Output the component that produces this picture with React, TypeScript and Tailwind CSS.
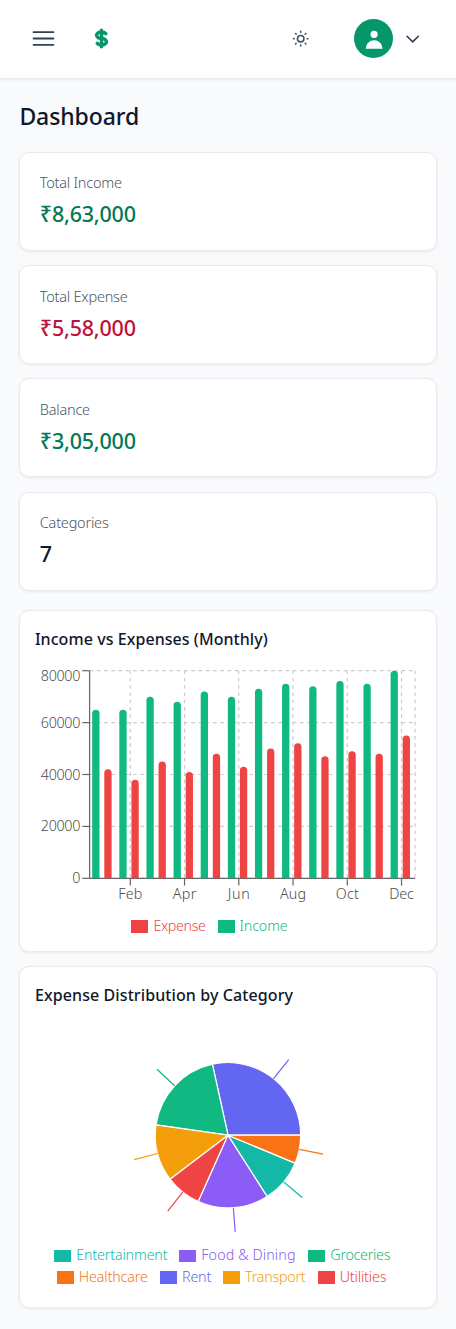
import React from "react";

const INCOME = [65, 65, 70, 68, 72, 70, 73, 75, 74, 76, 75, 80];
const EXPENSE = [42, 38, 45, 41, 48, 43, 50, 52, 47, 49, 48, 55];
const GREEN = "#10b981";
const RED = "#ef4444";

const PLOT = { left: 89.6, right: 415.1, top: 59.7, bottom: 267.3 };
const BAND = (PLOT.right - PLOT.left) / 12;
const X0 = 20;

function Header() {
  return (
    <header className="relative flex h-[77.5px] shrink-0 items-center bg-white pr-[34px] pl-[29px] shadow-[0_1px_3px_rgba(15,23,42,0.12)]">
      <svg className="size-[29px] text-slate-700" viewBox="0 0 24 24" fill="none" stroke="currentColor" strokeWidth="1.5" strokeLinecap="round">
        <path d="M3.75 6.75h16.5M3.75 12h16.5M3.75 17.25h16.5" />
      </svg>
      <svg className="ml-[24.2px] size-[39px] text-[#059669]" viewBox="0 0 24 24" fill="none" stroke="currentColor" strokeWidth="2.2" strokeLinecap="round" strokeLinejoin="round">
        <path d="M12 8c-1.657 0-3 .895-3 2s1.343 2 3 2 3 .895 3 2-1.343 2-3 2m0-8c1.11 0 2.08.402 2.599 1M12 8V7m0 1v8m0 0v1m0-1c-1.11 0-2.08-.402-2.599-1" />
      </svg>
      <svg className="ml-auto size-[19.4px] text-slate-600" viewBox="0 0 24 24" fill="none" stroke="currentColor" strokeWidth="2" strokeLinecap="round" strokeLinejoin="round">
        <path d="M12 3v1m0 16v1m9-9h-1M4 12H3m15.364 6.364l-.707-.707M6.343 6.343l-.707-.707m12.728 0l-.707.707M6.343 17.657l-.707.707M16 12a4 4 0 11-8 0 4 4 0 018 0z" />
      </svg>
      <div className="ml-[43.6px] flex size-[39px] items-center justify-center rounded-full bg-[#059669] text-white">
        <svg className="size-[24.2px]" viewBox="0 0 20 20" fill="currentColor">
          <path d="M10 9a3 3 0 100-6 3 3 0 000 6zm-7 9a7 7 0 1114 0H3z" />
        </svg>
      </div>
      <svg className="ml-[9.2px] size-[19.4px] text-slate-700" viewBox="0 0 24 24" fill="none" stroke="currentColor" strokeWidth="2" strokeLinecap="round" strokeLinejoin="round">
        <path d="M19 9l-7 7-7-7" />
      </svg>
    </header>
  );
}

const CARD = "rounded-[10px] border border-[#e8eaef] bg-white shadow-[0_1px_3px_rgba(15,23,42,0.07)]";

function Stat({ label, value, color }: { label: string; value: string; color: string }) {
  return (
    <div className={`${CARD} h-[98.8px] px-[19.4px] pt-[19.4px]`}>
      <div className="text-[14.5px] leading-[20px] font-light tracking-[-0.22px] text-[#4b5563]">{label}</div>
      <div className={`mt-[5px] text-[21.5px] leading-[34px] font-medium tracking-[-0.2px] ${color}`}>{value}</div>
    </div>
  );
}

function BarChart() {
  const axis = { stroke: "#666", strokeWidth: 1.21 };
  const rows = [0, 20000, 40000, 60000, 80000];
  const h = PLOT.bottom - PLOT.top;
  const cols = ["Feb", "Apr", "Jun", "Aug", "Oct", "Dec"];
  const widths = [24, 23.5, 22, 26, 23, 24.5];
  const bar = (x: number, v: number) => {
    const y = PLOT.bottom - (v / 80) * h;
    return `M${x} ${PLOT.bottom}V${y + 3.65}a3.65 3.65 0 0 1 7.3 0V${PLOT.bottom}z`;
  };
  return (
    <svg className="block h-[245px] w-[400px] font-['Noto_Sans',sans-serif] text-[14.3px] font-light" viewBox={`${X0} 50 400 245`} fill="#4d4d4d">
      <g stroke="#ccc" strokeWidth="1.21" strokeDasharray="3.63 3.63">
        {rows.map((r) => (
          <path key={r} d={`M${PLOT.left} ${PLOT.bottom - (r / 80000) * h}H${PLOT.right}`} />
        ))}
        {cols.map((c, i) => (
          <path key={c} d={`M${PLOT.left + BAND * (1.5 + i * 2)} ${PLOT.top}V${PLOT.bottom}`} />
        ))}
        <path d={`M${PLOT.right} ${PLOT.top}V${PLOT.bottom}`} />
      </g>
      <g {...axis}>
        <path d={`M${PLOT.left} ${PLOT.bottom}H${PLOT.right}M${PLOT.left} ${PLOT.top}V${PLOT.bottom}`} />
        {rows.map((r) => (
          <path key={r} d={`M${PLOT.left - 7.3} ${PLOT.bottom - (r / 80000) * h}h7.3`} />
        ))}
        {cols.map((c, i) => (
          <path key={c} d={`M${PLOT.left + BAND * (1.5 + i * 2)} ${PLOT.bottom}v7.3`} />
        ))}
      </g>
      {rows.map((r) => (
        <text key={r} x="80.3" y={(r === 80000 ? 65 : PLOT.bottom - (r / 80000) * h) + 5} textAnchor="end" textLength={r ? 39.5 : 8}>
          {r}
        </text>
      ))}
      {cols.map((c, i) => (
        <text key={c} x={PLOT.left + BAND * (1.5 + i * 2)} y="288" textAnchor="middle" textLength={widths[i]}>
          {c}
        </text>
      ))}
      {INCOME.map((v, i) => (
        <path key={i} fill={GREEN} d={bar(92.2 + BAND * i, v)} />
      ))}
      {EXPENSE.map((v, i) => (
        <path key={i} fill={RED} d={bar(104.3 + BAND * i, v)} />
      ))}
    </svg>
  );
}

const SLICES: [number, number, string][] = [
  [0, 102.4, "#6366f1"],
  [102.4, 171.9, "#10b981"],
  [171.9, 217.2, "#f59e0b"],
  [217.2, 245.9, "#ef4444"],
  [245.9, 302.6, "#8b5cf6"],
  [302.6, 337.4, "#14b8a6"],
  [337.4, 360, "#f97316"],
];

function PieChart() {
  const pt = (r: number, a: number) => `${200 + r * Math.cos((a * Math.PI) / 180)} ${110.2 - r * Math.sin((a * Math.PI) / 180)}`;
  return (
    <svg className="block h-[220px] w-[400px] self-center" viewBox="0 0 400 220">
      {SLICES.map(([a, b, c]) => (
        <g key={c}>
          <path fill={c} stroke="#fff" strokeWidth="1.21" strokeLinejoin="round" d={`M200 110.2L${pt(72.7, a)}A72.7 72.7 0 0 0 ${pt(72.7, b)}z`} />
          <path stroke={c} strokeWidth="1.21" d={`M${pt(72.7, (a + b) / 2)}L${pt(96.9, (a + b) / 2)}`} />
        </g>
      ))}
    </svg>
  );
}

function Legend({ items }: { items: [string, string, string, string][] }) {
  return (
    <div className="flex h-[21.6px] items-center justify-center gap-[12.1px] text-[14.3px] leading-[21px] font-light">
      {items.map(([name, swatch, text, width]) => (
        <div key={name} className="flex items-center gap-[5px]">
          <span className={`mt-[2px] h-[12.7px] w-[17px] ${swatch}`} />
          <span className={`whitespace-nowrap ${text} ${width}`}>{name}</span>
        </div>
      ))}
    </div>
  );
}

export default function App() {
  return (
    <div className="flex min-h-[1329px] flex-col bg-[#f9fafc] font-['Noto_Sans','Open_Sans',sans-serif] text-[#0f172a]">
      <Header />
      <main className="flex flex-col px-[19.4px] pt-[19.4px]">
        <h1 className="mb-[16px] text-[23px] leading-[39px] font-medium tracking-[-0.1px]">Dashboard</h1>
        <div className="flex flex-col gap-[14.5px]">
          <Stat label="Total Income" value="₹8,63,000" color="text-[#047857]" />
          <Stat label="Total Expense" value="₹5,58,000" color="text-[#be123c]" />
          <Stat label="Balance" value="₹3,05,000" color="text-[#047857]" />
          <Stat label="Categories" value="7" color="text-[#0f172a]" />
        </div>
        <section className={`${CARD} mt-[19.4px] flex h-[341.7px] flex-col pt-[15.3px]`}>
          <h2 className="h-[34.5px] pl-[14.5px] text-[16px] leading-[27px] font-medium tracking-[0.06px]">Income vs Expenses (Monthly)</h2>
          <BarChart />
          <div className="mt-[9px] pr-[37px]">
            <Legend items={[["Expense", "bg-[#ef4444]", "text-[#ef4444]", "w-[52px] tracking-[-0.36px]"], ["Income", "bg-[#10b981]", "text-[#10b981]", "w-[48px] tracking-[-0.15px]"]]} />
          </div>
        </section>
        <section className={`${CARD} mt-[14.5px] flex h-[341.7px] flex-col pt-[15.3px]`}>
          <h2 className="h-[42.5px] pl-[14.5px] text-[16px] leading-[27px] font-medium tracking-[0.1px]">Expense Distribution by Category</h2>
          <PieChart />
          <div className="-mt-[0.8px] pr-[11.5px] tracking-[-0.15px]">
            <Legend items={[["Entertainment", "bg-[#14b8a6]", "text-[#14b8a6]", "w-[91px]"], ["Food & Dining", "bg-[#8b5cf6]", "text-[#8b5cf6]", "w-[95px] tracking-[0.12px]"], ["Groceries", "bg-[#10b981]", "text-[#10b981]", "w-[60px] tracking-[-0.3px]"]]} />
            <Legend items={[["Healthcare", "bg-[#f97316]", "text-[#f97316]", "w-[69px]"], ["Rent", "bg-[#6366f1]", "text-[#6366f1]", "w-[29px]"], ["Transport", "bg-[#f59e0b]", "text-[#f59e0b]", "w-[60.5px] tracking-[-0.25px]"], ["Utilities", "bg-[#ef4444]", "text-[#ef4444]", "w-[48px]"]]} />
          </div>
        </section>
      </main>
    </div>
  );
}
